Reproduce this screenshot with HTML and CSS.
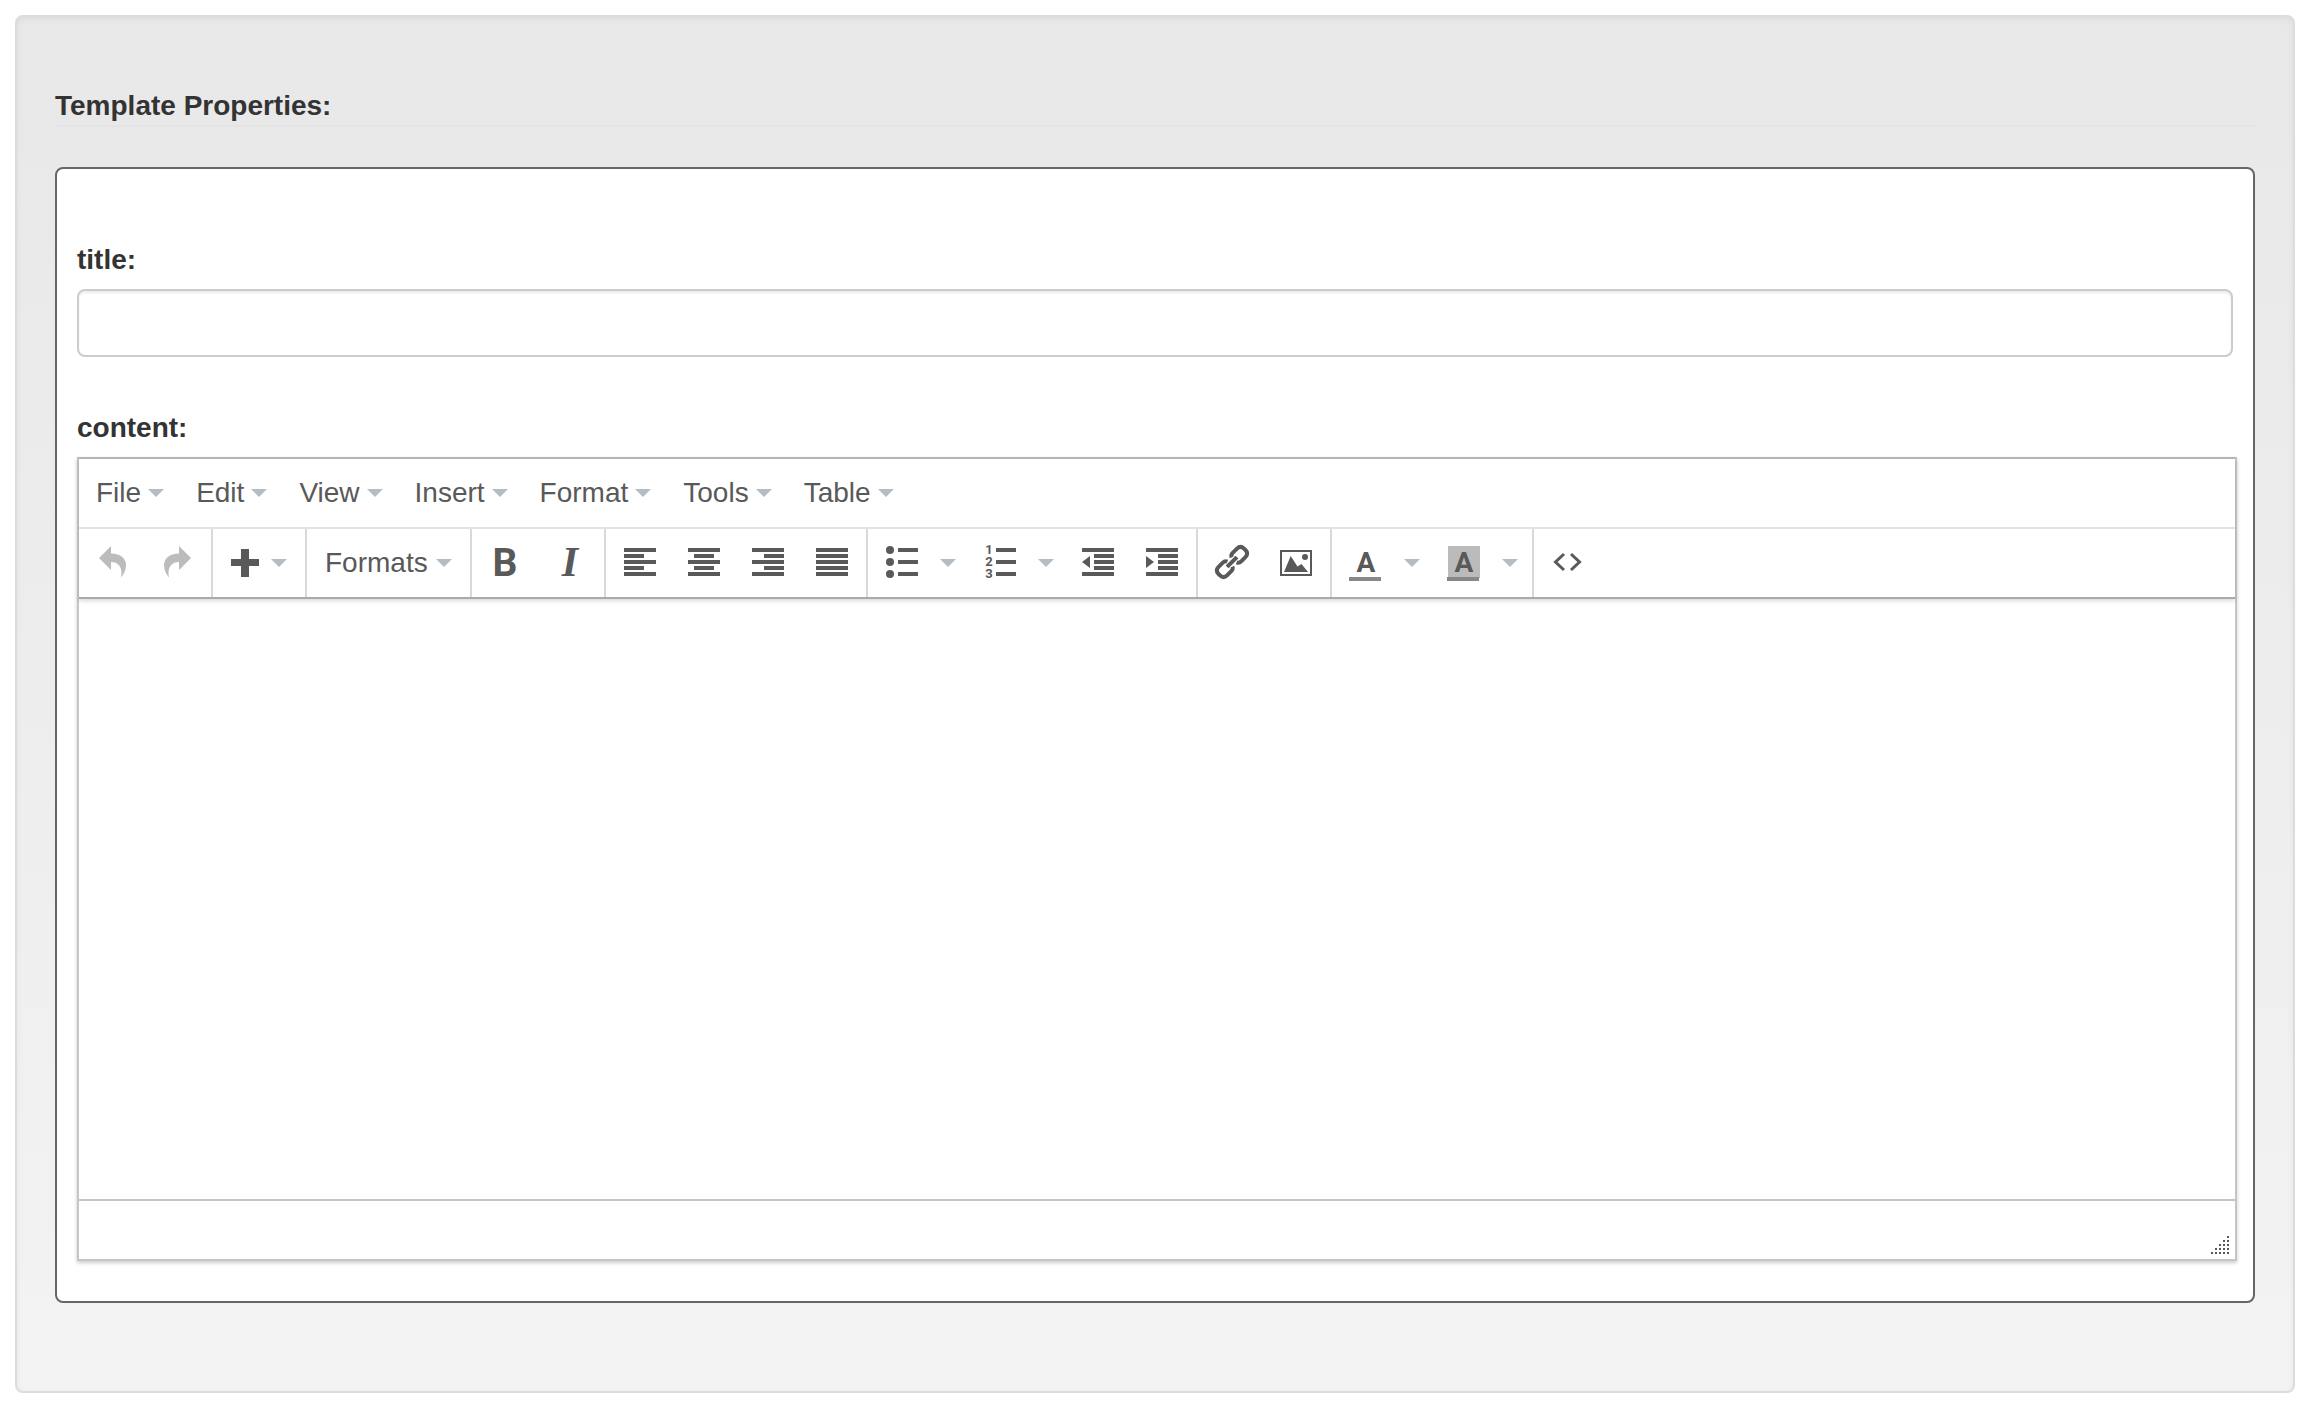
FILE: index.html
```html
<!DOCTYPE html>
<html lang="en">
<head>
  <meta charset="utf-8">
  <title>Template Properties</title>
  <link rel="stylesheet" href="styles.css">
</head>
<body>
  <form class="well">
    <h4 class="legend">Template Properties:</h4>
    <div class="panel">
      <label class="field-label" for="title">title:</label>
      <input class="form-control" type="text" id="title" name="title">

      <label class="field-label" for="content">content:</label>
      <div class="editor">
        <div class="editor-head">
          <div class="menubar">
            <button type="button" class="menu-btn">File<i class="caret"></i></button>
            <button type="button" class="menu-btn">Edit<i class="caret"></i></button>
            <button type="button" class="menu-btn">View<i class="caret"></i></button>
            <button type="button" class="menu-btn">Insert<i class="caret"></i></button>
            <button type="button" class="menu-btn">Format<i class="caret"></i></button>
            <button type="button" class="menu-btn">Tools<i class="caret"></i></button>
            <button type="button" class="menu-btn">Table<i class="caret"></i></button>
          </div>
          <div class="toolbar">
            <div class="group">
              <button type="button" class="btn" aria-label="Undo" disabled>
                <svg class="icon" viewBox="0 0 32 32"><path d="M2 12L14 0V7.500C24 7.500 29 13 29 19C29 24 27 28 24 31.500C26 22 22 16 14 16V24Z"/></svg>
              </button>
              <button type="button" class="btn" aria-label="Redo" disabled>
                <svg class="icon" viewBox="0 0 32 32"><path d="M30 12L18 0V7.500C8 7.500 3 13 3 19C3 24 5 28 8 31.500C6 22 10 16 18 16V24Z"/></svg>
              </button>
            </div>
            <div class="group">
              <button type="button" class="btn btn-menu" aria-label="Insert">
                <svg class="icon" viewBox="0 0 32 32"><path d="M12 3h8v10h10v7H20v11h-8V20H2v-7h10z"/></svg><i class="caret"></i>
              </button>
            </div>
            <div class="group">
              <button type="button" class="btn btn-text">Formats<i class="caret"></i></button>
            </div>
            <div class="group">
              <button type="button" class="btn" aria-label="Bold">
                <svg class="icon" viewBox="0 0 32 32"><text class="glyph-bold" x="15" y="30">B</text></svg>
              </button>
              <button type="button" class="btn" aria-label="Italic">
                <svg class="icon" viewBox="0 0 32 32"><text class="glyph-italic" x="16" y="30">I</text></svg>
              </button>
            </div>
            <div class="group">
              <button type="button" class="btn" aria-label="Align left">
                <svg class="icon" viewBox="0 0 32 32"><path d="M0 2h32v4H0zM0 8h20v4H0zM0 14h32v4H0zM0 20h20v4H0zM0 26h32v4H0z"/></svg>
              </button>
              <button type="button" class="btn" aria-label="Align center">
                <svg class="icon" viewBox="0 0 32 32"><path d="M0 2h32v4H0zM6 8h20v4H6zM0 14h32v4H0zM6 20h20v4H6zM0 26h32v4H0z"/></svg>
              </button>
              <button type="button" class="btn" aria-label="Align right">
                <svg class="icon" viewBox="0 0 32 32"><path d="M0 2h32v4H0zM12 8h20v4H12zM0 14h32v4H0zM12 20h20v4H12zM0 26h32v4H0z"/></svg>
              </button>
              <button type="button" class="btn" aria-label="Justify">
                <svg class="icon" viewBox="0 0 32 32"><path d="M0 2h32v4H0zM0 8h32v4H0zM0 14h32v4H0zM0 20h32v4H0zM0 26h32v4H0z"/></svg>
              </button>
            </div>
            <div class="group">
              <button type="button" class="btn" aria-label="Bullet list">
                <svg class="icon" viewBox="0 0 32 32"><circle cx="4" cy="4" r="4"/><circle cx="4" cy="16" r="4"/><circle cx="4" cy="28" r="4"/><path d="M12 2h20v4H12zM12 14h20v4H12zM12 26h20v4H12z"/></svg>
              </button>
              <button type="button" class="btn-open" aria-label="Bullet styles"><i class="caret"></i></button>
              <button type="button" class="btn" aria-label="Numbered list">
                <svg class="icon" viewBox="0 0 32 32"><text class="glyph-num" x="5" y="8">1</text><text class="glyph-num" x="5" y="20">2</text><text class="glyph-num" x="5" y="32">3</text><path d="M12 2h20v4H12zM12 14h20v4H12zM12 26h20v4H12z"/></svg>
              </button>
              <button type="button" class="btn-open" aria-label="Number styles"><i class="caret"></i></button>
              <button type="button" class="btn" aria-label="Decrease indent">
                <svg class="icon" viewBox="0 0 32 32"><path d="M0 2h32v4H0zM12 8h20v4H12zM12 14h20v4H12zM12 20h20v4H12zM0 26h32v4H0zM8 10v12L0 16z"/></svg>
              </button>
              <button type="button" class="btn" aria-label="Increase indent">
                <svg class="icon" viewBox="0 0 32 32"><path d="M0 2h32v4H0zM12 8h20v4H12zM12 14h20v4H12zM12 20h20v4H12zM0 26h32v4H0zM0 10v12L8 16z"/></svg>
              </button>
            </div>
            <div class="group">
              <button type="button" class="btn" aria-label="Insert link">
                <svg class="icon line line-thick" viewBox="0 0 32 32"><g transform="rotate(-45 16 16)"><path d="M13 19.500Q12 22 9 22H3Q-2 22 -2 17V15Q-2 10 3 10H9Q12 10 13 12.500M19 19.500Q20 22 23 22H29Q34 22 34 17V15Q34 10 29 10H23Q20 10 19 12.500M9 16H23"/></g></svg>
              </button>
              <button type="button" class="btn" aria-label="Insert image">
                <svg class="icon" viewBox="0 0 32 32"><path fill-rule="evenodd" d="M0 4h32v26H0zM2 6v22h28V6z"/><circle cx="25" cy="11" r="3"/><path d="M4 26L10.700 10L17.500 20.500L21.500 18L28 26z"/></svg>
              </button>
            </div>
            <div class="group">
              <button type="button" class="btn btn-color" aria-label="Text color">
                <svg class="icon" viewBox="0 0 32 32"><text class="glyph-color" x="16" y="26">A</text></svg>
                <span class="swatch"></span>
              </button>
              <button type="button" class="btn-open" aria-label="Text colors"><i class="caret"></i></button>
              <button type="button" class="btn btn-color" aria-label="Background color">
                <svg class="icon icon-back" viewBox="0 0 32 32"><text class="glyph-color" x="16" y="26">A</text></svg>
                <span class="swatch"></span>
              </button>
              <button type="button" class="btn-open" aria-label="Background colors"><i class="caret"></i></button>
            </div>
            <div class="group">
              <button type="button" class="btn" aria-label="Source code">
                <svg class="icon line" viewBox="0 0 32 32"><path d="M12 8L3.500 16L12 24M19 8L27.500 16L19 24"/></svg>
              </button>
            </div>
          </div>
        </div>
        <textarea class="edit-area" id="content" name="content"></textarea>
        <div class="statusbar">
          <svg class="resize" viewBox="0 0 18 18"><path d="M16 0h2v2h-2zM12 4h2v2h-2zM16 4h2v2h-2zM8 8h2v2H8zM12 8h2v2h-2zM16 8h2v2h-2zM4 12h2v2H4zM8 12h2v2H8zM12 12h2v2h-2zM16 12h2v2h-2zM0 16h2v2H0zM4 16h2v2H4zM8 16h2v2H8zM12 16h2v2h-2zM16 16h2v2h-2z"/></svg>
        </div>
      </div>
    </div>
  </form>
</body>
</html>
```
FILE: styles.css
```css
* {
  box-sizing: border-box;
}
body {
  margin: 0;
  padding: 15px;
  background: #fff;
  color: #333;
  font-family: "Liberation Sans", Arial, sans-serif;
  font-size: 28px;
  line-height: 38px;
}
button {
  font: inherit;
  color: #595959;
  background: transparent;
  border: 0;
  margin: 0;
  padding: 0;
}
.well {
  padding: 70px 38px 88px;
  border: 2px solid #dcdcdc;
  border-radius: 8px;
  background: linear-gradient(to bottom, #e8e8e8 0%, #f3f3f3 100%);
  box-shadow: inset 0 2px 6px rgba(0,0,0,0.05);
}
.legend {
  margin: 0 0 40px;
  border-bottom: 2px solid #e5e5e5;
  font-size: 28px;
  font-weight: bold;
}
.panel {
  padding: 72px 20px 40px;
  border: 2px solid #666;
  border-radius: 8px;
  background: #fff;
}
.field-label {
  display: block;
  margin-bottom: 10px;
  font-weight: bold;
}
.form-control {
  display: block;
  width: 100%;
  height: 68px;
  margin-bottom: 52px;
  padding: 12px 24px;
  border: 2px solid #ccc;
  border-radius: 8px;
  font: inherit;
  box-shadow: inset 0 2px 2px rgba(0,0,0,0.075);
}

/* editor */
.editor {
  box-sizing: content-box;
  width: 100%;
  border: 2px solid #c5c5c5;
  border-top-color: #b8b8b8;
  box-shadow: 0 2px 4px rgba(0,0,0,0.2);
}
.editor-head {
  border-bottom: 2px solid #aaa;
  box-shadow: 0 2px 4px rgba(0,0,0,0.15);
}
.menubar {
  display: flex;
  gap: 2px;
  height: 70px;
  padding: 0 2px;
  border-bottom: 2px solid #e2e2e8;
}
.menu-btn {
  display: flex;
  align-items: center;
  gap: 7px;
  padding: 0 15px;
}
.caret {
  border-top: 8px solid #b5bcc2;
  border-left: 8px solid transparent;
  border-right: 8px solid transparent;
}
.toolbar {
  display: flex;
  height: 68px;
}
.group {
  display: flex;
  padding: 0 2px;
}
.group + .group {
  border-left: 2px solid #d9d9d9;
}
.btn {
  display: flex;
  align-items: center;
  padding: 0 16px;
}
.btn:disabled {
  opacity: 0.4;
}
.btn-menu {
  gap: 10px;
  padding-left: 14px;
}
.btn-text {
  gap: 8px;
}
.btn-open {
  display: flex;
  align-items: center;
  padding: 0 12px 0 6px;
}
.icon {
  width: 32px;
  height: 32px;
  margin-bottom: 2px;
  fill: #595959;
  overflow: visible;
}
.line {
  fill: none;
  stroke: #595959;
  stroke-width: 3;
}
.line-thick {
  stroke-width: 4;
}
.btn-color {
  position: relative;
}
.icon-back {
  background: #bbb;
}
.swatch {
  position: absolute;
  left: 15px;
  bottom: 16px;
  width: 32px;
  height: 4px;
  background: #888;
}
.glyph-bold,
.glyph-italic,
.glyph-num,
.glyph-color {
  font-family: Roboto, sans-serif;
  font-weight: bold;
  text-anchor: middle;
}
.glyph-bold {
  font-size: 39px;
}
.glyph-italic {
  font-family: "Liberation Serif", serif;
  font-size: 42px;
  font-style: italic;
}
.glyph-num {
  font-size: 13px;
}
.glyph-color {
  font-size: 28px;
}
.edit-area {
  display: block;
  width: 100%;
  height: 600px;
  padding: 16px;
  border: 0;
  background: transparent;
  font: inherit;
  resize: none;
}
.statusbar {
  display: flex;
  justify-content: flex-end;
  align-items: flex-end;
  height: 60px;
  padding: 5px 6px;
  border-top: 2px solid #c5c5c5;
}
.resize {
  width: 18px;
  height: 18px;
  fill: #595959;
}
```
